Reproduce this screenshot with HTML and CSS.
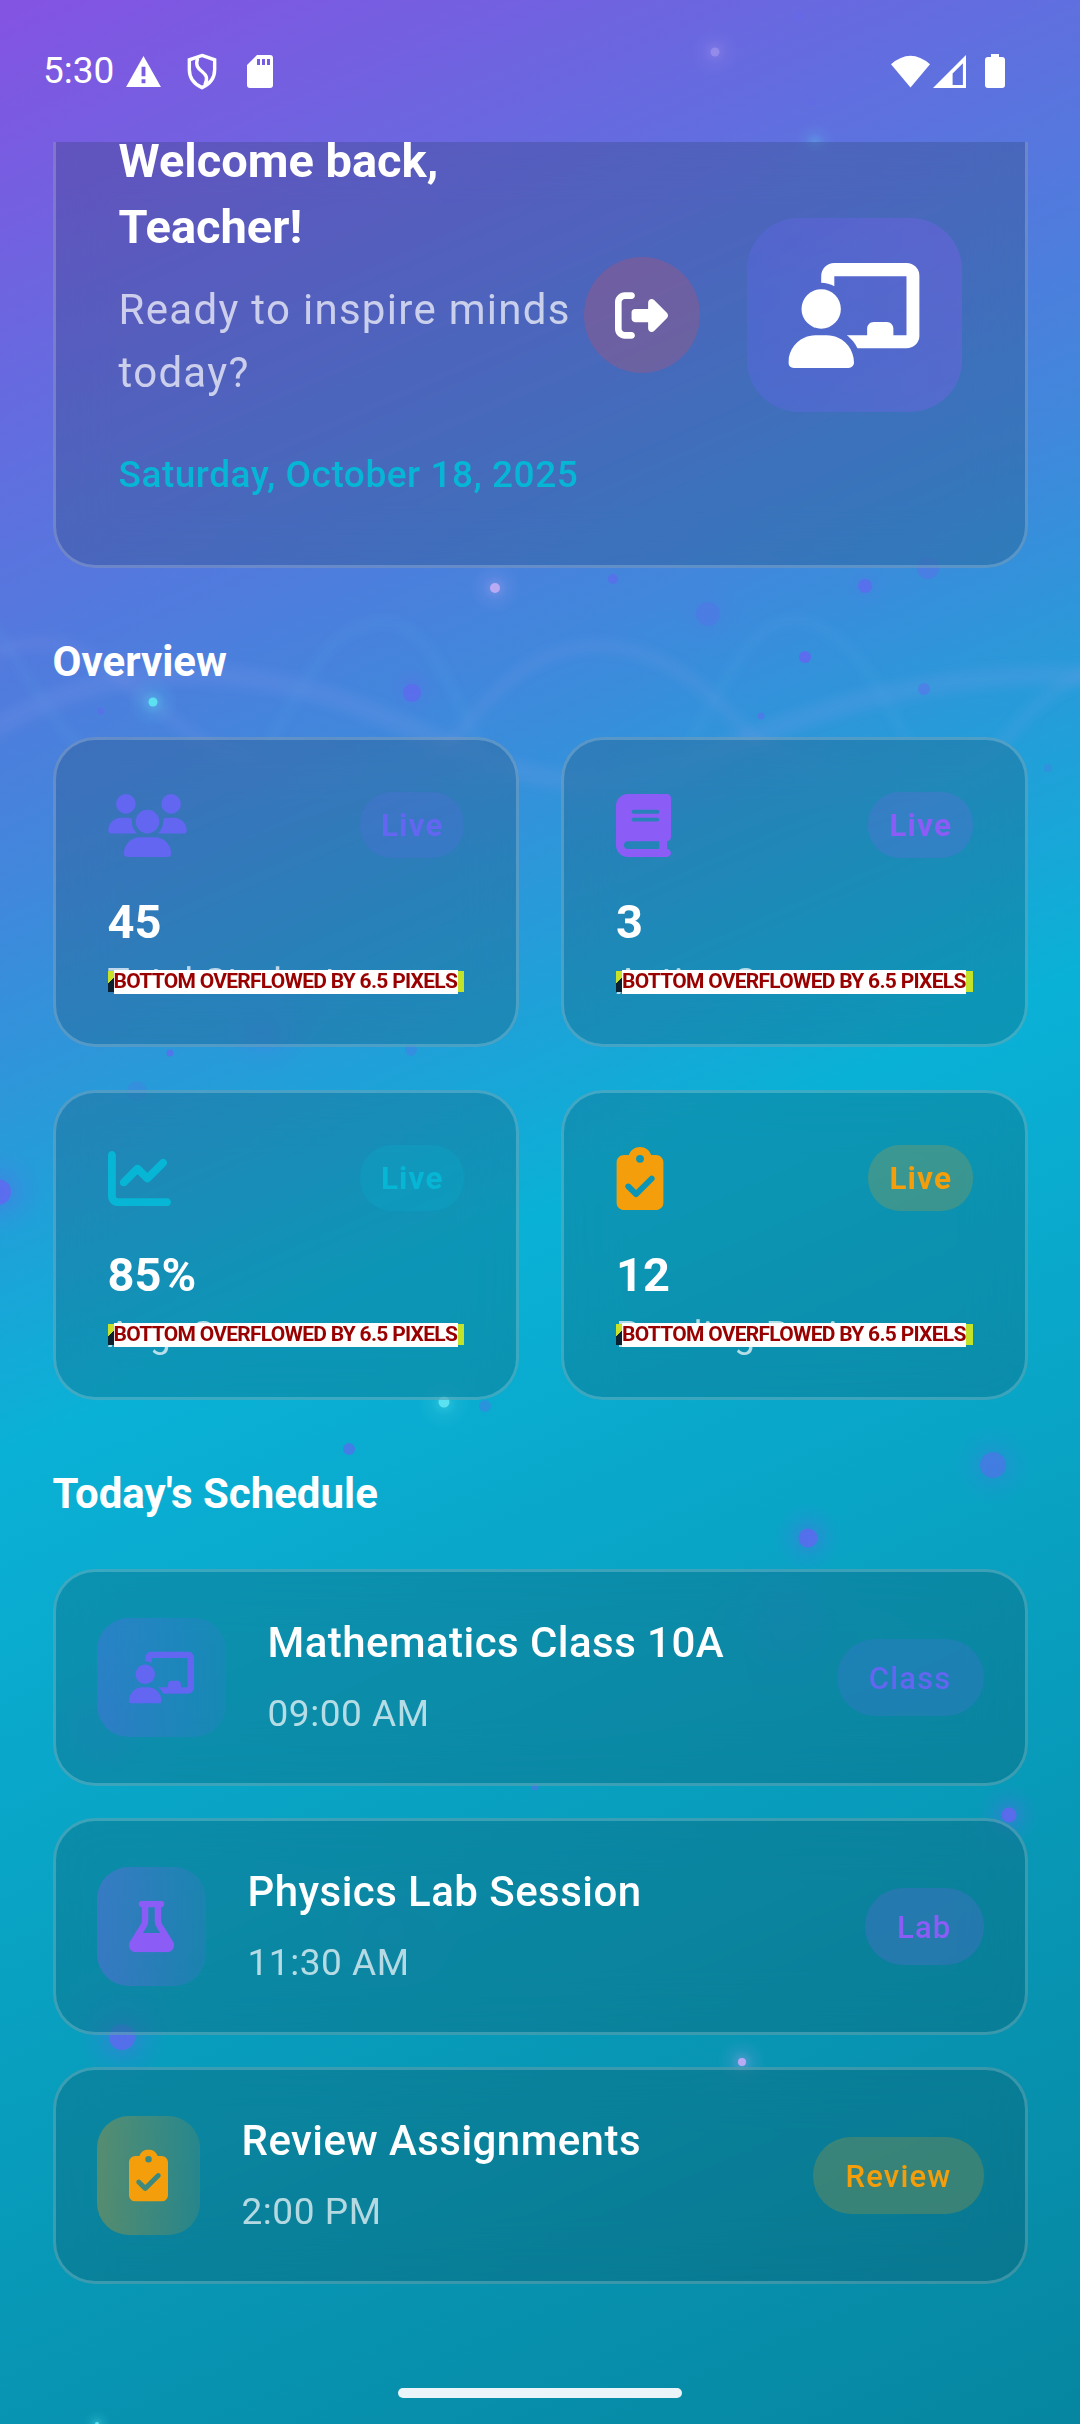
FILE: index.html
```html
<!DOCTYPE html>
<html lang="en">
<head>
<meta charset="utf-8">
<title>Teacher Dashboard</title>
<link rel="stylesheet" href="styles.css">
</head>
<body>
<svg class="sprite" width="0" height="0" aria-hidden="true">
  <symbol id="teacher" viewBox="0 0 640 512"><path d="M160 64c0-35.300 28.700-64 64-64H576c35.300 0 64 28.700 64 64V352c0 35.300-28.700 64-64 64H336.800c-11.800-25.500-29.900-47.500-52.400-64H384V320c0-17.700 14.300-32 32-32h64c17.700 0 32 14.300 32 32v32h64V64L224 64v49.100C205.200 102.200 183.300 96 160 96V64zm0 64a96 96 0 1 1 0 192 96 96 0 1 1 0-192zM133.300 352h53.300C260.300 352 320 411.700 320 485.300c0 14.700-11.900 26.700-26.700 26.700H26.700C11.900 512 0 500.100 0 485.300C0 411.700 59.700 352 133.300 352z"/></symbol>
  <symbol id="exit" viewBox="0 0 512 512"><path d="M377.900 105.900L500.700 228.700c7.200 7.200 11.300 17.100 11.300 27.300s-4.100 20.100-11.300 27.300L377.900 406.100c-6.400 6.400-15 9.900-24 9.900c-18.700 0-33.900-15.200-33.900-33.900l0-62.100-128 0c-17.700 0-32-14.300-32-32l0-64c0-17.700 14.300-32 32-32l128 0 0-62.100c0-18.700 15.200-33.900 33.900-33.900c9 0 17.600 3.600 24 9.900zM160 96L96 96c-17.700 0-32 14.300-32 32l0 256c0 17.700 14.300 32 32 32l64 0c17.700 0 32 14.300 32 32s-14.300 32-32 32l-64 0c-53 0-96-43-96-96L0 128C0 75 43 32 96 32l64 0c17.700 0 32 14.300 32 32s-14.300 32-32 32z"/></symbol>
  <symbol id="users" viewBox="0 0 640 512"><path d="M144 0a80 80 0 1 1 0 160A80 80 0 1 1 144 0zM512 0a80 80 0 1 1 0 160A80 80 0 1 1 512 0zM0 298.700C0 239.800 47.800 192 106.700 192h42.700c15.900 0 31 3.500 44.600 9.700c-1.300 7.200-1.900 14.700-1.900 22.300c0 38.200 16.800 72.500 43.300 96c-.2 0-.4 0-.7 0H21.300C9.600 320 0 310.400 0 298.700zM405.300 320c-.2 0-.4 0-.7 0c26.600-23.500 43.300-57.800 43.300-96c0-7.600-.7-15-1.900-22.300c13.600-6.300 28.700-9.700 44.600-9.700h42.700C592.200 192 640 239.800 640 298.700c0 11.800-9.600 21.300-21.300 21.300H405.300zM224 224a96 96 0 1 1 192 0 96 96 0 1 1-192 0zM128 485.300C128 411.700 187.700 352 261.300 352H378.700C452.300 352 512 411.700 512 485.300c0 14.700-11.900 26.700-26.700 26.700H154.700c-14.700 0-26.700-11.900-26.700-26.700z"/></symbol>
  <symbol id="book" viewBox="0 0 448 512"><path d="M96 0C43 0 0 43 0 96V416c0 53 43 96 96 96H384h32c17.700 0 32-14.300 32-32s-14.300-32-32-32V384c17.700 0 32-14.300 32-32V32c0-17.700-14.300-32-32-32H384 96zm0 384H352v64H96c-17.700 0-32-14.300-32-32s14.300-32 32-32zm32-240c0-8.800 7.200-16 16-16H336c8.800 0 16 7.200 16 16s-7.200 16-16 16H144c-8.800 0-16-7.200-16-16zm16 48H336c8.800 0 16 7.200 16 16s-7.200 16-16 16H144c-8.800 0-16-7.200-16-16s7.200-16 16-16z"/></symbol>
  <symbol id="chart" viewBox="0 0 512 512"><path d="M64 64c0-17.700-14.300-32-32-32S0 46.300 0 64V400c0 44.200 35.800 80 80 80H480c17.700 0 32-14.300 32-32s-14.300-32-32-32H80c-8.800 0-16-7.200-16-16V64zm406.600 86.600c12.500-12.500 12.500-32.800 0-45.300s-32.800-12.500-45.300 0L320 210.700l-57.400-57.400c-12.500-12.500-32.800-12.500-45.300 0l-112 112c-12.500 12.500-12.500 32.800 0 45.300s32.800 12.500 45.300 0L240 221.300l57.400 57.400c12.500 12.500 32.800 12.500 45.300 0l128-128z"/></symbol>
  <symbol id="clip" viewBox="0 0 384 512"><path d="M192 0c-41.800 0-77.400 26.700-90.500 64H64C28.700 64 0 92.700 0 128V448c0 35.300 28.700 64 64 64H320c35.300 0 64-28.700 64-64V128c0-35.300-28.700-64-64-64H282.500C269.400 26.700 233.800 0 192 0zm0 64a32 32 0 1 1 0 64 32 32 0 1 1 0-64zM305 273L177 401c-9.400 9.400-24.600 9.400-33.900 0L79 337c-9.400-9.400-9.400-24.600 0-33.900s24.600-9.400 33.900 0l47 47L271 239c9.400-9.400 24.600-9.400 33.900 0s9.400 24.600 0 33.900z"/></symbol>
  <symbol id="flask" viewBox="0 0 448 512"><path d="M288 0H160 128C110.300 0 96 14.300 96 32s14.300 32 32 32V196.800c0 11.800-3.300 23.500-9.500 33.500L10.300 406.200C3.600 417.200 0 429.700 0 442.600C0 480.900 31.100 512 69.400 512H378.600c38.300 0 69.400-31.100 69.400-69.400c0-12.800-3.600-25.400-10.300-36.400L329.500 230.400c-6.200-10.100-9.500-21.700-9.500-33.500V64c17.700 0 32-14.300 32-32s-14.300-32-32-32H288zM192 196.800V64h64V196.800c0 23.700 6.600 46.900 19 67.100L309.500 320h-171L173 263.900c12.400-20.200 19-43.400 19-67.100z"/></symbol>
</svg>

<div class="screen">
  <svg class="backdrop" viewBox="0 0 1080 2424" aria-hidden="true">
    <defs>
      <filter id="soft" x="-5%" y="-40%" width="110%" height="180%"><feGaussianBlur stdDeviation="5"/></filter>
      <radialGradient id="glowBlue"><stop offset="0" stop-color="#6366f1" stop-opacity=".42"/><stop offset=".6" stop-color="#6366f1" stop-opacity=".1"/><stop offset="1" stop-color="#6366f1" stop-opacity="0"/></radialGradient>
      <radialGradient id="glowPink"><stop offset="0" stop-color="#b9a5f5" stop-opacity=".38"/><stop offset=".5" stop-color="#b9a5f5" stop-opacity=".1"/><stop offset="1" stop-color="#b9a5f5" stop-opacity="0"/></radialGradient>
      <radialGradient id="glowCyan"><stop offset="0" stop-color="#5ce1f0" stop-opacity=".38"/><stop offset=".5" stop-color="#5ce1f0" stop-opacity=".1"/><stop offset="1" stop-color="#5ce1f0" stop-opacity="0"/></radialGradient>
    </defs>
    <g class="waves" filter="url(#soft)">
      <path stroke-width="20" stroke="#9aa3ee" stroke-opacity=".13" d="M-10 730C60 690 120 672 190 674C300 676 370 710 450 745C540 790 620 790 700 760C830 700 950 670 1090 676"/>
      <path stroke-width="13" stroke="#9aa3ee" stroke-opacity=".11" d="M-10 655C30 635 70 640 110 670C150 700 180 730 210 745C300 790 400 790 450 745C500 680 540 647 595 646C660 645 710 690 755 740C850 800 940 800 1000 745C1030 710 1050 690 1090 670"/>
      <path stroke-width="9" stroke="#5cb0f0" stroke-opacity=".11" d="M-10 620C30 680 50 720 80 745M270 740C310 680 325 625 385 622C430 625 450 690 480 745M690 740C725 690 745 622 795 620C850 625 880 690 910 745"/>
    </g>
    <g class="glows">
      <circle cx="715" cy="52" r="24" fill="url(#glowPink)" opacity=".7"/><circle cx="815" cy="142" r="20" fill="url(#glowCyan)" opacity=".7"/>
      <circle cx="495" cy="588" r="25" fill="url(#glowPink)"/><circle cx="153" cy="702" r="25" fill="url(#glowCyan)"/>
      <circle cx="444" cy="1403" r="26" fill="url(#glowCyan)"/><circle cx="742" cy="2062" r="24" fill="url(#glowPink)"/>
      <circle cx="0" cy="1192" r="44" fill="url(#glowBlue)"/><circle cx="993" cy="1465" r="40" fill="url(#glowBlue)" opacity=".7"/>
      <circle cx="808" cy="1537" r="34" fill="url(#glowBlue)"/><circle cx="1009" cy="1815" r="30" fill="url(#glowBlue)"/>
      <circle cx="122" cy="2037" r="44" fill="url(#glowBlue)"/><circle cx="412" cy="689" r="26" fill="url(#glowBlue)" opacity=".8"/>
      <circle cx="708" cy="614" r="36" fill="url(#glowBlue)" opacity=".3"/><circle cx="865" cy="586" r="22" fill="url(#glowBlue)" opacity=".5"/>
      <circle cx="97" cy="2424" r="14" fill="url(#glowCyan)"/>
      <circle cx="265" cy="1030" r="46" fill="url(#glowBlue)" opacity=".6"/><circle cx="785" cy="1625" r="75" fill="url(#glowBlue)" opacity=".35"/>
      <circle cx="105" cy="1725" r="50" fill="url(#glowBlue)" opacity=".6"/><circle cx="392" cy="1932" r="45" fill="url(#glowBlue)" opacity=".35"/>
    </g>
    <g class="dots">
      <circle cx="799" cy="17" r="5" opacity=".35"/><circle cx="812" cy="102" r="4" opacity=".25"/><circle cx="613" cy="579" r="5" opacity=".6"/>
      <circle cx="865" cy="586" r="7" opacity=".65"/><circle cx="928" cy="568" r="11" opacity=".4"/><circle cx="708" cy="614" r="12" opacity=".28"/>
      <circle cx="805" cy="657" r="6" opacity=".85"/><circle cx="412" cy="693" r="9" opacity=".65"/><circle cx="924" cy="689" r="6" opacity=".45"/>
      <circle cx="101" cy="711" r="3.500" opacity=".45"/><circle cx="761" cy="716" r="3.500" opacity=".5"/><circle cx="1048" cy="768" r="4" opacity=".25"/>
      <circle cx="170" cy="1053" r="3.500" opacity=".7"/><circle cx="411" cy="1050" r="6" opacity=".3"/><circle cx="137" cy="1091" r="10" opacity=".2"/>
      <circle cx="-2" cy="1192" r="13" opacity=".8"/><circle cx="485" cy="1406" r="6" opacity=".35"/><circle cx="349" cy="1449" r="6" opacity=".65"/>
      <circle cx="993" cy="1465" r="13" opacity=".5"/><circle cx="808" cy="1538" r="9.500" opacity=".75"/><circle cx="535" cy="1787" r="3.500" opacity=".5"/>
      <circle cx="1009" cy="1815" r="7.500" opacity=".85"/><circle cx="122" cy="2037" r="13" opacity=".75"/>
      <circle class="pale" cx="715" cy="52" r="4.500" opacity=".4"/><circle class="pale" cx="495" cy="588" r="5"/><circle class="pale" cx="742" cy="2062" r="4"/>
      <circle class="aqua" cx="153" cy="702" r="4.500"/><circle class="aqua" cx="444" cy="1402" r="5.500"/><circle class="aqua" cx="97" cy="2424" r="2"/>
    </g>
  </svg>

  <header class="statusbar">
    <span class="clock">5:30</span>
    <svg class="sys sys-warn" viewBox="0 0 36 32"><path fill-rule="evenodd" d="M18 0 36 32H0ZM16 11v10h4V11ZM16 24v4h4v-4Z"/></svg>
    <svg class="sys sys-shield" viewBox="0 0 32 38"><path class="line" d="M16 2.500 29 7V17C29 26 24 32 16 35.500C8 32 3 26 3 17V7Z"/><path class="line" d="M11.500 5C9 13 12 16 16 19C21 23 22 26 19 33"/></svg>
    <svg class="sys sys-card" viewBox="0 0 26 33"><path fill-rule="evenodd" d="M10 0H23Q26 0 26 3V30Q26 33 23 33H3Q0 33 0 30V10ZM10 4V10H13V4ZM15 4V10H18V4ZM20 4V10H23V4Z"/></svg>
    <span class="spacer"></span>
    <svg class="sys sys-wifi" viewBox="0 0 40 33"><path d="M0 9Q20 -8.500 40 9L20 33Z"/></svg>
    <svg class="sys sys-cell" viewBox="0 0 32 32"><path fill-rule="evenodd" d="M32 0V32H0ZM29 8 19 18V29H29Z"/></svg>
    <svg class="sys sys-batt" viewBox="0 0 20 34"><path d="M6 0H14V3H17Q20 3 20 6V31Q20 34 17 34H3Q0 34 0 31V6Q0 3 3 3H6Z"/></svg>
  </header>

  <main class="content">
    <section class="glass welcome">
      <div class="greeting">
        <h1>Welcome back,<br>Teacher!</h1>
        <p class="tagline">Ready to inspire minds<br>today?</p>
        <p class="date">Saturday, October 18, 2025</p>
      </div>
      <button class="logout" aria-label="Log out"><svg viewBox="0 0 512 512"><use href="#exit"/></svg></button>
      <div class="avatar"><svg viewBox="0 0 640 512"><use href="#teacher"/></svg></div>
    </section>

    <h2>Overview</h2>
    <section class="stats">
      <article class="glass stat indigo">
        <div class="stat-top"><svg class="w640" viewBox="0 0 640 512"><use href="#users"/></svg><span class="live">Live</span></div>
        <strong>45</strong><span class="label">Total Students</span><div class="overflow"><span>BOTTOM OVERFLOWED BY 6.5 PIXELS</span></div>
      </article>
      <article class="glass stat violet">
        <div class="stat-top"><svg class="w448" viewBox="0 0 448 512"><use href="#book"/></svg><span class="live">Live</span></div>
        <strong>3</strong><span class="label">Active Courses</span><div class="overflow"><span>BOTTOM OVERFLOWED BY 6.5 PIXELS</span></div>
      </article>
      <article class="glass stat cyan">
        <div class="stat-top"><svg class="w512" viewBox="0 0 512 512"><use href="#chart"/></svg><span class="live">Live</span></div>
        <strong>85%</strong><span class="label">Avg. Score</span><div class="overflow"><span>BOTTOM OVERFLOWED BY 6.5 PIXELS</span></div>
      </article>
      <article class="glass stat amber">
        <div class="stat-top"><svg class="w384" viewBox="0 0 384 512"><use href="#clip"/></svg><span class="live">Live</span></div>
        <strong>12</strong><span class="label">Pending Reviews</span><div class="overflow"><span>BOTTOM OVERFLOWED BY 6.5 PIXELS</span></div>
      </article>
    </section>

    <h2>Today's Schedule</h2>
    <section class="schedule">
      <article class="glass lesson indigo">
        <div class="tile"><svg class="w640" viewBox="0 0 640 512"><use href="#teacher"/></svg></div>
        <div class="lesson-text"><h3>Mathematics Class 10A</h3><p>09:00 AM</p></div><span class="tag">Class</span>
      </article>
      <article class="glass lesson violet">
        <div class="tile"><svg class="w448" viewBox="0 0 448 512"><use href="#flask"/></svg></div>
        <div class="lesson-text"><h3>Physics Lab Session</h3><p>11:30 AM</p></div><span class="tag">Lab</span>
      </article>
      <article class="glass lesson amber">
        <div class="tile"><svg class="w384" viewBox="0 0 384 512"><use href="#clip"/></svg></div>
        <div class="lesson-text"><h3>Review Assignments</h3><p>2:00 PM</p></div><span class="tag">Review</span>
      </article>
    </section>
  </main>
  <div class="home-bar"></div>
</div>
</body>
</html>
```
FILE: styles.css
```css
* { box-sizing: border-box; }
body { margin: 0; font-family: Roboto, "Noto Sans", sans-serif; color: #fff; }
h1, h2, h3, p { margin: 0; }
.sprite { position: absolute; }
svg { display: block; fill: currentColor; }

.screen {
  position: relative;
  display: flex;
  flex-direction: column;
  width: 1080px;
  height: 2424px;
  overflow: hidden;
  background: linear-gradient(155.98deg, #8453e2 0%, #4088dc 31%, #0ab1d6 50%, #0686a0 100%);
}
.backdrop { position: absolute; inset: 0; width: 1080px; height: 2424px; }
.waves path { fill: none; }
.dots { fill: #6366f1; }
.dots .pale { fill: #b9aaf3; }
.dots .aqua { fill: #5ce1f0; }

/* System bar */
.statusbar {
  position: relative;
  flex: none;
  display: flex;
  align-items: center;
  height: 142px;
  padding: 0 75px 0 43px;
}
.clock { font-size: 37px; line-height: 44px; width: 83px; }
.sys-warn { width: 35px; height: 31px; }
.sys-shield { width: 32px; height: 37px; margin-left: 25px; }
.sys-card { width: 26px; height: 33px; margin-left: 29px; }
.sys .line { fill: none; stroke: #fff; stroke-width: 3.5; }
.spacer { flex: 1; }
.sys-wifi { width: 39px; height: 33px; }
.sys-cell { width: 33px; height: 33px; margin-left: 3px; }
.sys-batt { width: 20px; height: 34px; margin-left: 19px; }

.content {
  position: relative;
  flex: 1;
  padding: 0 52.5px;
  overflow: hidden;
}
.glass {
  border: 3px solid rgba(255, 255, 255, .2);
  border-radius: 42px;
  background: rgba(18, 46, 56, .2);
  backdrop-filter: blur(26px);
}

/* Welcome card */
.welcome {
  display: flex;
  height: 486px;
  margin-top: -60px;
  padding: 43px 63px 0;
}
.greeting { width: 465px; white-space: nowrap; }
h1 { font-size: 47px; line-height: 66px; font-weight: 700; }
.tagline { margin-top: 18px; font-size: 42px; line-height: 63px; letter-spacing: 1.3px; color: rgba(255, 255, 255, .7); }
.date { margin-top: 44px; font-size: 37px; line-height: 54px; font-weight: 500; letter-spacing: .53px; color: #06b6d4; }
.logout {
  display: flex;
  align-items: center;
  justify-content: center;
  width: 116px;
  height: 116px;
  margin-top: 129px;
  padding: 0;
  border: 0;
  border-radius: 50%;
  color: #fff;
  background: rgba(239, 68, 68, .22);
}
.logout svg { width: 53px; height: 53px; }
.avatar {
  display: flex;
  align-items: center;
  justify-content: center;
  width: 215px;
  height: 194px;
  margin: 90px 0 0 47px;
  border-radius: 52px;
  background: linear-gradient(90deg, rgba(99, 102, 241, .3), rgba(139, 92, 246, .3));
}
.avatar svg { width: 132px; height: 105px; }

h2 { margin: 69px 0 50px; font-size: 42px; line-height: 50px; font-weight: 700; }

.indigo { --accent: #6366f1; --tint: rgba(99, 102, 241, .2); --start: rgba(99, 102, 241, .35); --end: rgba(99, 102, 241, .12); }
.violet { --accent: #8b5cf6; --tint: rgba(139, 92, 246, .2); --start: rgba(139, 92, 246, .35); --end: rgba(139, 92, 246, .12); }
.cyan { --accent: #06b6d4; --tint: rgba(6, 182, 212, .2); }
.amber { --accent: #f59e0b; --tint: rgba(245, 158, 11, .2); --start: rgba(245, 158, 11, .32); --end: rgba(245, 158, 11, .12); }

/* Overview grid */
.stats { display: grid; grid-template-columns: 466.5px 466.5px; gap: 43px 42px; }
.stat { position: relative; height: 310px; padding: 52px; }
.stat-top { display: flex; justify-content: space-between; align-items: flex-start; height: 66px; color: var(--accent); }
.stat-top svg { height: 63px; margin-top: 2px; }
.stat-top .w640 { width: 79px; }
.stat-top .w512 { width: 63px; }
.stat-top .w448 { width: 55px; }
.stat-top .w384 { width: 48px; }
.live {
  padding: 2px 20.5px 0 21px;
  border-radius: 32px;
  font-size: 31.5px;
  line-height: 64px;
  font-weight: 700;
  letter-spacing: 1.1px;
  background: var(--tint);
}
.stat strong { display: block; margin-top: 36px; font-size: 47px; line-height: 56px; font-weight: 700; }
.label { display: block; margin-top: 7px; font-size: 37px; line-height: 50px; letter-spacing: .8px; white-space: nowrap; color: rgba(255, 255, 255, .7); }
.overflow {
  position: absolute;
  left: 52px;
  right: 52px;
  top: 231px;
  display: flex;
  height: 21px;
  background: linear-gradient(135deg, #c8e22a 0 9px, #0b2130 9px 22px, transparent 22px) left / 22px 21px no-repeat, #c3e32b;
}
.overflow span {
  align-self: center;
  margin-left: 6px;
  width: 344px;
  height: 24px;
  background: #fff;
  color: #900;
  font-size: 21px;
  line-height: 22px;
  font-weight: 700;
  letter-spacing: -.72px;
  white-space: nowrap;
}

/* Schedule */
.schedule { display: grid; gap: 32px; }
.lesson { display: flex; align-items: center; height: 217px; padding: 0 41px; }
.tile {
  display: flex;
  align-items: center;
  height: 119px;
  padding: 0 32px;
  border-radius: 32px;
  color: var(--accent);
  background: linear-gradient(90deg, var(--start), var(--end));
}
.tile svg { height: 53px; }
.tile .w640 { width: 65px; }
.tile .w448 { width: 45px; }
.tile .w384 { width: 39px; }
.lesson-text { flex: 1; margin-left: 42px; }
h3 { font-size: 42px; line-height: 60px; font-weight: 500; letter-spacing: .45px; }
.lesson-text p { margin-top: 13px; font-size: 37px; line-height: 56px; letter-spacing: .55px; color: rgba(255, 255, 255, .7); }
.tag {
  padding: 2px 32px 0;
  border-radius: 38px;
  font-size: 31px;
  line-height: 75px;
  font-weight: 500;
  letter-spacing: 1.2px;
  color: var(--accent);
  background: var(--tint);
}

.home-bar {
  position: absolute;
  left: 398px;
  bottom: 26px;
  width: 284px;
  height: 10px;
  border-radius: 5px;
  background: #ebf4f8;
}
```
